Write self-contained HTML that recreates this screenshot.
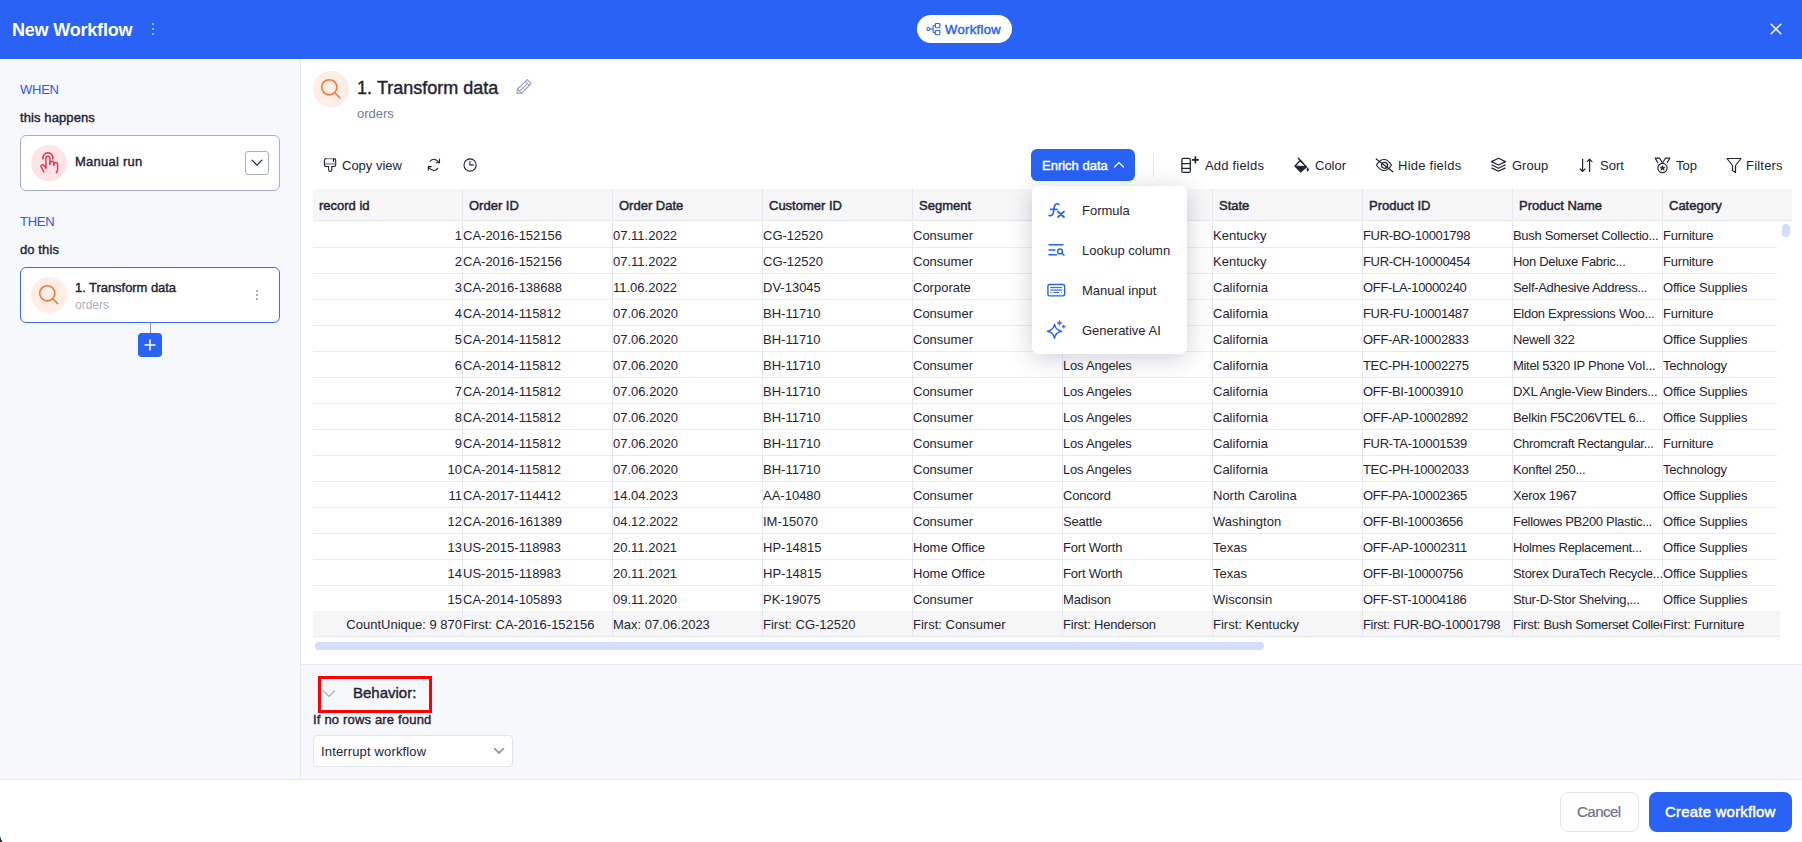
<!DOCTYPE html>
<html><head><meta charset="utf-8">
<style>
*{box-sizing:border-box;margin:0;padding:0}
html,body{width:1802px;height:842px;overflow:hidden;background:#fff;font-family:"Liberation Sans",sans-serif;color:#1f2433}
body{position:relative}
.a{position:absolute}
.t{position:absolute;font-size:13px;line-height:15px;white-space:nowrap;color:#1f2433}
.sb{-webkit-text-stroke:0.4px currentColor}
svg{position:absolute;overflow:visible}

#grid{position:absolute;left:313px;top:189px;width:1479px;height:450px;overflow:hidden}
#ghead{position:absolute;left:0;top:0;width:1479px;height:32px;background:#f7f7f8;border-bottom:1px solid #e6e8ef;display:flex}
.h{width:150px;flex:none;height:31px;padding-left:6px;font-size:13px;line-height:33px;color:#1f2433;border-right:1px solid #e6e8ef;-webkit-text-stroke:0.45px #1f2433}
#gbody{position:absolute;left:0;top:33px;width:1464px}
.row{display:flex;height:26px;border-bottom:1px solid #e9ebf0;width:1464px}
.c{width:150px;flex:none;height:25px;font-size:13px;line-height:27px;white-space:nowrap;overflow:hidden;border-right:1px solid #e6e8ef;color:#1f2433}
.c.r{text-align:right}
.k5,.k9{letter-spacing:-0.2px}.k7{letter-spacing:-0.33px}.k8{letter-spacing:-0.3px}
#gfoot{position:absolute;left:0;top:422px;width:1467px;height:26px;background:#f6f6f7;display:flex;border-bottom:1px solid #e6e8ef}
</style></head><body>

<!-- ===== HEADER ===== -->
<div class="a" style="left:0;top:0;width:1802px;height:59px;background:#2962f5"></div>
<div class="a" style="left:12px;top:19px;font-size:18px;font-weight:bold;color:#fff;line-height:22px;letter-spacing:-0.2px;white-space:nowrap">New Workflow</div>
<div class="a" style="left:152px;top:23px;width:2px;height:2px;border-radius:1px;background:#b9c9fb"></div>
<div class="a" style="left:152px;top:28px;width:2px;height:2px;border-radius:1px;background:#b9c9fb"></div>
<div class="a" style="left:152px;top:33px;width:2px;height:2px;border-radius:1px;background:#b9c9fb"></div>
<div class="a" style="left:917px;top:15px;width:95px;height:28px;background:#fff;border-radius:14px"></div>
<svg style="left:926px;top:23px" width="15" height="12" viewBox="0 0 15 12" fill="none" stroke="#2962f5" stroke-width="1.15"><circle cx="2.4" cy="6" r="1.5"/><path d="M3.9 6H7.1M9.3 2.5H8.2Q7.1 2.5 7.1 3.6V8.4Q7.1 9.5 8.2 9.5H9.3"/><rect x="9.3" y="0.5" width="4.6" height="4.2" rx="0.9"/><rect x="9.3" y="7.5" width="4.6" height="4.2" rx="0.9"/></svg>
<div class="t sb" style="left:945px;top:22px;color:#2962f5;-webkit-text-stroke:0.45px #2962f5;letter-spacing:0.35px">Workflow</div>
<svg style="left:1770px;top:23px" width="12" height="12" viewBox="0 0 12 12" stroke="#fff" stroke-width="1.5" stroke-linecap="round"><path d="M1.2 1.2L10.8 10.8M10.8 1.2L1.2 10.8"/></svg>

<!-- ===== SIDEBAR ===== -->
<div class="a" style="left:0;top:59px;width:301px;height:720px;background:#f7f8fc;border-right:1px solid #e6e8ef"></div>
<div class="t" style="left:20px;top:82px;color:#2457ff;letter-spacing:-0.25px">WHEN</div>
<div class="t sb" style="left:20px;top:110px;letter-spacing:0.1px">this happens</div>
<div class="a" style="left:20px;top:135px;width:260px;height:56px;background:#fff;border:1px solid #a9adc9;border-radius:6px"></div>
<div class="a" style="left:31px;top:145px;width:36px;height:36px;border-radius:18px;background:#fde4e7"></div>
<svg style="left:29px;top:143px" width="40" height="40" viewBox="0 0 40 40" fill="none" stroke="#e8374e" stroke-width="1.5" stroke-linecap="round" stroke-linejoin="round"><path d="M14 15.8A5 5 0 1 1 23.8 15.8"/><path d="M16.9 25.2V15.3A2 2 0 0 1 20.9 15.3V21.4"/><path d="M20.9 20.2A1.95 1.95 0 0 1 24.8 20.2V22.4"/><path d="M24.8 21.4A1.9 1.9 0 0 1 28.6 21.4V27L27.4 29.6"/><path d="M16.9 24.6L14.6 22.2Q12.6 20.8 11.9 23.1L14.8 29"/></svg>
<div class="t sb" style="left:75px;top:154px;letter-spacing:0.25px">Manual run</div>
<div class="a" style="left:245px;top:151px;width:24px;height:24px;border:1px solid #a9adc9;border-radius:3px;background:#fff"></div>
<svg style="left:251px;top:159px" width="12" height="8" viewBox="0 0 12 8" fill="none" stroke="#1f2433" stroke-width="1.2" stroke-linecap="round"><path d="M1 1.2L6 6.2L11 1.2"/></svg>

<div class="t" style="left:20px;top:214px;color:#2457ff;letter-spacing:-0.25px">THEN</div>
<div class="t sb" style="left:20px;top:242px;letter-spacing:0.1px">do this</div>
<div class="a" style="left:20px;top:267px;width:260px;height:56px;background:#fff;border:1.5px solid #3b6cf5;border-radius:6px"></div>
<div class="a" style="left:31px;top:277px;width:36px;height:36px;border-radius:18px;background:#feeee6"></div>
<svg style="left:29px;top:275px" width="40" height="40" viewBox="0 0 40 40" fill="none" stroke="#ef7a3e" stroke-width="1.6" stroke-linecap="round"><circle cx="18.3" cy="18.3" r="7.6"/><path d="M23.8 23.8L28.8 28.8"/></svg>
<div class="t sb" style="left:75px;top:280px;letter-spacing:-0.05px">1. Transform data</div>
<div class="a" style="left:75px;top:298px;font-size:12px;line-height:14px;color:#a8adc4;white-space:nowrap">orders</div>
<div class="a" style="left:256px;top:290px;width:2px;height:2px;background:#a8adc4"></div>
<div class="a" style="left:256px;top:294px;width:2px;height:2px;background:#a8adc4"></div>
<div class="a" style="left:256px;top:298px;width:2px;height:2px;background:#a8adc4"></div>
<div class="a" style="left:150px;top:323px;width:1px;height:10px;background:#8a8fa6"></div>
<div class="a" style="left:138px;top:333px;width:24px;height:24px;border-radius:4px;background:#2962f5"></div>
<svg style="left:143px;top:338px" width="14" height="14" viewBox="0 0 14 14" stroke="#fff" stroke-width="1.6"><path d="M7 1.5V12.5M1.5 7H12.5"/></svg>

<!-- ===== MAIN HEADER ===== -->
<div class="a" style="left:313px;top:71px;width:36px;height:36px;border-radius:18px;background:#feeee6"></div>
<svg style="left:311px;top:69px" width="40" height="40" viewBox="0 0 40 40" fill="none" stroke="#ef7a3e" stroke-width="1.6" stroke-linecap="round"><circle cx="18.3" cy="18.3" r="7.6"/><path d="M23.8 23.8L28.8 28.8"/></svg>
<div class="a sb" style="left:357px;top:77px;font-size:18px;line-height:22px;white-space:nowrap">1.</div>
<div class="a sb" style="left:377px;top:77px;font-size:18px;line-height:22px;white-space:nowrap">Transform data</div>
<svg style="left:515px;top:78px" width="18" height="18" viewBox="0 0 18 18" fill="none" stroke="#9a9fc0" stroke-width="1.1" stroke-linejoin="round"><path d="M2.2 15.5L2.4 11L12.3 1.6L16.1 5.5L6.6 15.4Z"/><path d="M2.4 11L6.6 15.4M10.4 3.4L14.2 7.3M4.6 13.1L11.8 6.1"/><path d="M2.6 13L2.5 15.3L4.8 15.2Z" fill="#c4c7dc" stroke="none"/></svg>
<div class="t" style="left:357px;top:106px;color:#757b9b">orders</div>

<!-- ===== TOOLBAR ===== -->
<svg style="left:322px;top:156px" width="16" height="18" viewBox="0 0 16 18" fill="none" stroke="#1f2433" stroke-width="1.1" stroke-linecap="round"><path d="M4.2 2.6H12" stroke="#8d9099" stroke-width="1.3"/><path d="M2.4 8.8V4.3Q2.4 2.6 4.1 2.6M12 2.6Q13.7 2.6 13.7 4.3V8.8Q13.7 10.5 12 10.5H9.8M6.6 10.5H4.1Q2.4 10.5 2.4 8.8"/><path d="M11.5 3.3V5.5"/><path d="M3 7.9H13.1" stroke="#8d9099" stroke-width="1.5" stroke-linecap="butt"/><path d="M6.6 10.5V13.8Q6.6 15.5 8.2 15.5Q9.8 15.5 9.8 13.8V10.5"/></svg>
<div class="t" style="left:342px;top:158px">Copy view</div>
<svg style="left:424px;top:155px" width="20" height="20" viewBox="0 0 20 20" fill="none" stroke="#1f2433" stroke-width="1.1" stroke-linecap="round" stroke-linejoin="round"><path d="M5.9 6.3Q10.2 1.9 15.2 7.3"/><path d="M15.5 4.1V7.7H12.3"/><path d="M13.8 13.3Q10.2 18.2 4.5 12.3"/><path d="M4.3 15.1V11.6H7.4"/></svg>
<svg style="left:460px;top:155px" width="20" height="20" viewBox="0 0 20 20" fill="none" stroke="#1f2433" stroke-width="1.1" stroke-linecap="round"><circle cx="10.1" cy="10" r="6.1"/><path d="M9.9 6.6V9.9H13.3"/></svg>

<div class="a" style="left:1031px;top:149px;width:104px;height:32px;background:#2962f5;border-radius:6px"></div>
<div class="t" style="left:1042px;top:158px;color:#fff;-webkit-text-stroke:0.45px #fff">Enrich data</div>
<svg style="left:1113px;top:160px" width="12" height="9" viewBox="0 0 12 9" fill="none" stroke="#fff" stroke-width="1.2" stroke-linecap="round"><path d="M1.5 7L6 2.5L10.5 7"/></svg>
<div class="a" style="left:1153px;top:153px;width:1px;height:24px;background:#e4e6ec"></div>

<svg style="left:1176px;top:152px" width="26" height="24" viewBox="0 0 26 24" fill="none" stroke="#1f2433" stroke-width="1.3"><rect x="5.9" y="6.4" width="8.4" height="14" rx="1.5"/><path d="M5.9 11.7H14.3M5.9 16.3H14.3"/><path d="M19.4 4.2V11.4M15.9 7.8H22.9" stroke-width="1.7"/></svg>
<div class="t" style="left:1205px;top:158px;letter-spacing:0.2px">Add fields</div>
<svg style="left:1292px;top:155px" width="20" height="20" viewBox="0 0 20 20"><path d="M3 11L8.3 5.6L14.4 12L8.7 16.7Z" fill="none" stroke="#1f2433" stroke-width="1.4" stroke-linejoin="round"/><path d="M3 11L14.4 11.6L8.7 16.7Z" fill="#1f2433" stroke="#1f2433" stroke-width="1" stroke-linejoin="round"/><path d="M6.2 3.2L10.8 8" stroke="#1f2433" stroke-width="1.3" stroke-linecap="round"/><path d="M15.7 12.3Q17.9 15.2 15.7 16.7Q13.5 15.2 15.7 12.3Z" fill="#1f2433"/></svg>
<div class="t" style="left:1315px;top:158px">Color</div>
<svg style="left:1375px;top:157px" width="18" height="16" viewBox="0 0 18 16" fill="none" stroke="#1f2433" stroke-width="1.2" stroke-linecap="round"><path d="M1.5 8Q5 2.5 9 2.5Q13 2.5 16.5 8Q13 13.5 9 13.5Q5 13.5 1.5 8Z"/><circle cx="9.5" cy="8.3" r="3"/><path d="M1.2 2L17.9 14.8"/></svg>
<div class="t" style="left:1398px;top:158px;letter-spacing:0.25px">Hide fields</div>
<svg style="left:1490px;top:157px" width="17" height="16" viewBox="0 0 17 16" fill="none" stroke="#1f2433" stroke-width="1.2" stroke-linejoin="round"><path d="M8.5 1.2L15.5 4.6L8.5 8L1.5 4.6Z"/><path d="M1.5 7.8L8.5 11.2L15.5 7.8"/><path d="M1.5 10.9L8.5 14.3L15.5 10.9"/></svg>
<div class="t" style="left:1512px;top:158px">Group</div>
<svg style="left:1579px;top:157px" width="15" height="16" viewBox="0 0 15 16" fill="none" stroke="#1f2433" stroke-width="1.2" stroke-linecap="round" stroke-linejoin="round"><path d="M3.6 2.2V14.4M1.2 12L3.6 14.4L6 12"/><path d="M10.6 14.4V2.2M8.2 4.6L10.6 2.2L13 4.6"/></svg>
<div class="t" style="left:1600px;top:158px">Sort</div>
<svg style="left:1654px;top:157px" width="17" height="17" viewBox="0 0 17 17" fill="none" stroke="#1f2433" stroke-width="1.2" stroke-linejoin="round"><path d="M4 6L1.2 1.2H5.6L8.3 5.7M13 6L15.8 1.2H11.4L8.7 5.7"/><circle cx="8.5" cy="11" r="4.6"/><path d="M8.5 8.4L9.3 10.2L11.1 10.3L9.7 11.5L10.2 13.3L8.5 12.3L6.8 13.3L7.3 11.5L5.9 10.3L7.7 10.2Z" fill="#1f2433" stroke-width="0.5"/></svg>
<div class="t" style="left:1676px;top:158px">Top</div>
<svg style="left:1726px;top:157px" width="16" height="17" viewBox="0 0 16 17" fill="none" stroke="#1f2433" stroke-width="1.2" stroke-linejoin="round"><path d="M1 1.5H15L9.5 8.5V15.5L6.5 13.5V8.5Z"/></svg>
<div class="t" style="left:1746px;top:158px;letter-spacing:0.2px">Filters</div>

<!-- ===== GRID ===== -->
<div id="grid">
  <div id="ghead"><div class="h">record id</div><div class="h">Order ID</div><div class="h">Order Date</div><div class="h">Customer ID</div><div class="h">Segment</div><div class="h">City</div><div class="h">State</div><div class="h">Product ID</div><div class="h">Product Name</div><div class="h">Category</div></div>
  <div id="gbody"><div class="row"><div class="c r">1</div><div class="c">CA-2016-152156</div><div class="c">07.11.2022</div><div class="c">CG-12520</div><div class="c">Consumer</div><div class="c k5">Henderson</div><div class="c">Kentucky</div><div class="c k7">FUR-BO-10001798</div><div class="c k8">Bush Somerset Collectio...</div><div class="c k9">Furniture</div></div>
<div class="row"><div class="c r">2</div><div class="c">CA-2016-152156</div><div class="c">07.11.2022</div><div class="c">CG-12520</div><div class="c">Consumer</div><div class="c k5">Henderson</div><div class="c">Kentucky</div><div class="c k7">FUR-CH-10000454</div><div class="c k8">Hon Deluxe Fabric...</div><div class="c k9">Furniture</div></div>
<div class="row"><div class="c r">3</div><div class="c">CA-2016-138688</div><div class="c">11.06.2022</div><div class="c">DV-13045</div><div class="c">Corporate</div><div class="c k5">Los Angeles</div><div class="c">California</div><div class="c k7">OFF-LA-10000240</div><div class="c k8">Self-Adhesive Address...</div><div class="c k9">Office Supplies</div></div>
<div class="row"><div class="c r">4</div><div class="c">CA-2014-115812</div><div class="c">07.06.2020</div><div class="c">BH-11710</div><div class="c">Consumer</div><div class="c k5">Fort Lauderdale</div><div class="c">California</div><div class="c k7">FUR-FU-10001487</div><div class="c k8">Eldon Expressions Woo...</div><div class="c k9">Furniture</div></div>
<div class="row"><div class="c r">5</div><div class="c">CA-2014-115812</div><div class="c">07.06.2020</div><div class="c">BH-11710</div><div class="c">Consumer</div><div class="c k5">Los Angeles</div><div class="c">California</div><div class="c k7">OFF-AR-10002833</div><div class="c k8">Newell 322</div><div class="c k9">Office Supplies</div></div>
<div class="row"><div class="c r">6</div><div class="c">CA-2014-115812</div><div class="c">07.06.2020</div><div class="c">BH-11710</div><div class="c">Consumer</div><div class="c k5">Los Angeles</div><div class="c">California</div><div class="c k7">TEC-PH-10002275</div><div class="c k8">Mitel 5320 IP Phone VoI...</div><div class="c k9">Technology</div></div>
<div class="row"><div class="c r">7</div><div class="c">CA-2014-115812</div><div class="c">07.06.2020</div><div class="c">BH-11710</div><div class="c">Consumer</div><div class="c k5">Los Angeles</div><div class="c">California</div><div class="c k7">OFF-BI-10003910</div><div class="c k8">DXL Angle-View Binders...</div><div class="c k9">Office Supplies</div></div>
<div class="row"><div class="c r">8</div><div class="c">CA-2014-115812</div><div class="c">07.06.2020</div><div class="c">BH-11710</div><div class="c">Consumer</div><div class="c k5">Los Angeles</div><div class="c">California</div><div class="c k7">OFF-AP-10002892</div><div class="c k8">Belkin F5C206VTEL 6...</div><div class="c k9">Office Supplies</div></div>
<div class="row"><div class="c r">9</div><div class="c">CA-2014-115812</div><div class="c">07.06.2020</div><div class="c">BH-11710</div><div class="c">Consumer</div><div class="c k5">Los Angeles</div><div class="c">California</div><div class="c k7">FUR-TA-10001539</div><div class="c k8">Chromcraft Rectangular...</div><div class="c k9">Furniture</div></div>
<div class="row"><div class="c r">10</div><div class="c">CA-2014-115812</div><div class="c">07.06.2020</div><div class="c">BH-11710</div><div class="c">Consumer</div><div class="c k5">Los Angeles</div><div class="c">California</div><div class="c k7">TEC-PH-10002033</div><div class="c k8">Konftel 250...</div><div class="c k9">Technology</div></div>
<div class="row"><div class="c r">11</div><div class="c">CA-2017-114412</div><div class="c">14.04.2023</div><div class="c">AA-10480</div><div class="c">Consumer</div><div class="c k5">Concord</div><div class="c">North Carolina</div><div class="c k7">OFF-PA-10002365</div><div class="c k8">Xerox 1967</div><div class="c k9">Office Supplies</div></div>
<div class="row"><div class="c r">12</div><div class="c">CA-2016-161389</div><div class="c">04.12.2022</div><div class="c">IM-15070</div><div class="c">Consumer</div><div class="c k5">Seattle</div><div class="c">Washington</div><div class="c k7">OFF-BI-10003656</div><div class="c k8">Fellowes PB200 Plastic...</div><div class="c k9">Office Supplies</div></div>
<div class="row"><div class="c r">13</div><div class="c">US-2015-118983</div><div class="c">20.11.2021</div><div class="c">HP-14815</div><div class="c">Home Office</div><div class="c k5">Fort Worth</div><div class="c">Texas</div><div class="c k7">OFF-AP-10002311</div><div class="c k8">Holmes Replacement...</div><div class="c k9">Office Supplies</div></div>
<div class="row"><div class="c r">14</div><div class="c">US-2015-118983</div><div class="c">20.11.2021</div><div class="c">HP-14815</div><div class="c">Home Office</div><div class="c k5">Fort Worth</div><div class="c">Texas</div><div class="c k7">OFF-BI-10000756</div><div class="c k8">Storex DuraTech Recycle...</div><div class="c k9">Office Supplies</div></div>
<div class="row"><div class="c r">15</div><div class="c">CA-2014-105893</div><div class="c">09.11.2020</div><div class="c">PK-19075</div><div class="c">Consumer</div><div class="c k5">Madison</div><div class="c">Wisconsin</div><div class="c k7">OFF-ST-10004186</div><div class="c k8">Stur-D-Stor Shelving,...</div><div class="c k9">Office Supplies</div></div></div>
  <div id="gfoot"><div class="c r">CountUnique: 9 870</div><div class="c">First: CA-2016-152156</div><div class="c">Max: 07.06.2023</div><div class="c">First: CG-12520</div><div class="c">First: Consumer</div><div class="c k5">First: Henderson</div><div class="c">First: Kentucky</div><div class="c k7">First: FUR-BO-10001798</div><div class="c k8">First: Bush Somerset Collection Bookcase</div><div class="c k9">First: Furniture</div></div>
</div>
<div class="a" style="left:315px;top:642px;width:949px;height:8px;border-radius:4px;background:#d3defa"></div>
<div class="a" style="left:1782px;top:224px;width:8px;height:13px;border-radius:4px;background:#d3defa"></div>

<!-- ===== MENU ===== -->
<div class="a" style="left:1032px;top:186px;width:155px;height:168px;background:#fff;border-radius:6px;box-shadow:0 4px 24px rgba(30,40,70,.22)"></div>
<svg style="left:1042px;top:198px" width="30" height="30" viewBox="0 0 30 30" fill="none" stroke="#2962f5" stroke-width="1.6" stroke-linecap="round"><path d="M16.9 6.3Q14.7 5.1 13.3 6.6Q12.4 7.6 12.1 10L11.1 15.8Q10.5 18.2 7.1 17.5"/><path d="M8.7 11.4H15"/><path d="M16.1 13.6L21.9 19M21.9 13.6L16.1 19" stroke-width="1.9"/></svg>
<div class="t" style="left:1082px;top:203px">Formula</div>
<svg style="left:1042px;top:238px" width="30" height="20" viewBox="0 0 30 20" fill="none" stroke="#2962f5" stroke-width="1.5" stroke-linecap="round"><path d="M7 6.8H21M7 12H12.9M7 16.7H14.4"/><circle cx="18" cy="13.4" r="2.4"/><path d="M19.8 15.2L22 17.1"/></svg>
<div class="t" style="left:1082px;top:243px">Lookup column</div>
<svg style="left:1042px;top:278px" width="30" height="22" viewBox="0 0 30 22" fill="none" stroke="#2962f5" stroke-width="1.4"><rect x="5.9" y="6.5" width="16.7" height="11.4" rx="1.6"/><path d="M8.3 9.6H19.9" stroke-width="1.1"/><path d="M8.3 12.1H19.9" stroke-width="1.5" stroke="#5b86f7"/><path d="M8.4 14.5H9.3M11.4 14.5H17.1M19.1 14.5H19.9" stroke-width="1.1"/></svg>
<div class="t" style="left:1082px;top:283px">Manual input</div>
<svg style="left:1042px;top:318px" width="30" height="26" viewBox="0 0 30 26" fill="none" stroke="#2962f5" stroke-width="1.4" stroke-linejoin="round"><path d="M12.5 6.1Q13.5 12.2 19.6 13.2Q13.5 14.2 12.5 20.3Q11.5 14.2 5.4 13.2Q11.5 12.2 12.5 6.1Z"/><path d="M17.5 2.6Q17.8 4.7 19.9 5Q17.8 5.3 17.5 7.4Q17.2 5.3 15.1 5Q17.2 4.7 17.5 2.6Z" fill="#2962f5" stroke-width="0.6"/><path d="M21.7 6.8Q21.9 8.4 23.5 8.6Q21.9 8.8 21.7 10.4Q21.5 8.8 19.9 8.6Q21.5 8.4 21.7 6.8Z" fill="#2962f5" stroke-width="0.6"/></svg>
<div class="t" style="left:1082px;top:323px">Generative AI</div>

<!-- ===== BOTTOM ===== -->
<div class="a" style="left:301px;top:664px;width:1501px;height:115px;background:#f7f8fc;border-top:1px solid #e6e8ef"></div>
<div class="a" style="left:318px;top:676px;width:114px;height:37px;border:3px solid #ff0000"></div>
<svg style="left:321px;top:688px" width="15" height="10" viewBox="0 0 15 10" fill="none" stroke="#a3a7bb" stroke-width="1.1" stroke-linecap="round"><path d="M2.3 2.6L8 8.4L13.7 2.6"/></svg>
<div class="a sb" style="left:353px;top:684px;font-size:15px;line-height:18px;white-space:nowrap">Behavior:</div>
<div class="t sb" style="left:313px;top:712px;letter-spacing:0.18px">If no rows are found</div>
<div class="a" style="left:313px;top:735px;width:200px;height:32px;background:#fff;border:1px solid #e3e5ee;border-radius:4px"></div>
<div class="t" style="left:321px;top:744px;letter-spacing:0.15px">Interrupt workflow</div>
<svg style="left:492px;top:746px" width="14" height="10" viewBox="0 0 14 10" fill="none" stroke="#9699ad" stroke-width="1.8" stroke-linecap="round" stroke-linejoin="round"><path d="M2.6 2.6L7 7L11.4 2.6"/></svg>

<!-- ===== FOOTER ===== -->
<div class="a" style="left:0;top:779px;width:1802px;height:63px;background:#fff;border-top:1px solid #e6e8ef"></div>
<div class="a" style="left:1560px;top:792px;width:79px;height:40px;border:1px solid #e3e5ee;border-radius:8px;background:#fff"></div>
<div class="a" style="left:1577px;top:803px;font-size:15px;line-height:18px;color:#6b7090;white-space:nowrap;-webkit-text-stroke:0.2px #6b7090;letter-spacing:-0.5px">Cancel</div>
<div class="a" style="left:1649px;top:792px;width:143px;height:40px;border-radius:8px;background:#2962f5"></div>
<div class="a" style="left:1665px;top:803px;font-size:15px;line-height:18px;color:#fff;white-space:nowrap;-webkit-text-stroke:0.5px #fff;letter-spacing:0.2px">Create workflow</div>

<svg style="left:0;top:832px" width="6" height="10" viewBox="0 0 6 10"><path d="M0 3.5Q0.6 8 2.6 10H0Z" fill="#1c2a35"/></svg>
</body></html>
